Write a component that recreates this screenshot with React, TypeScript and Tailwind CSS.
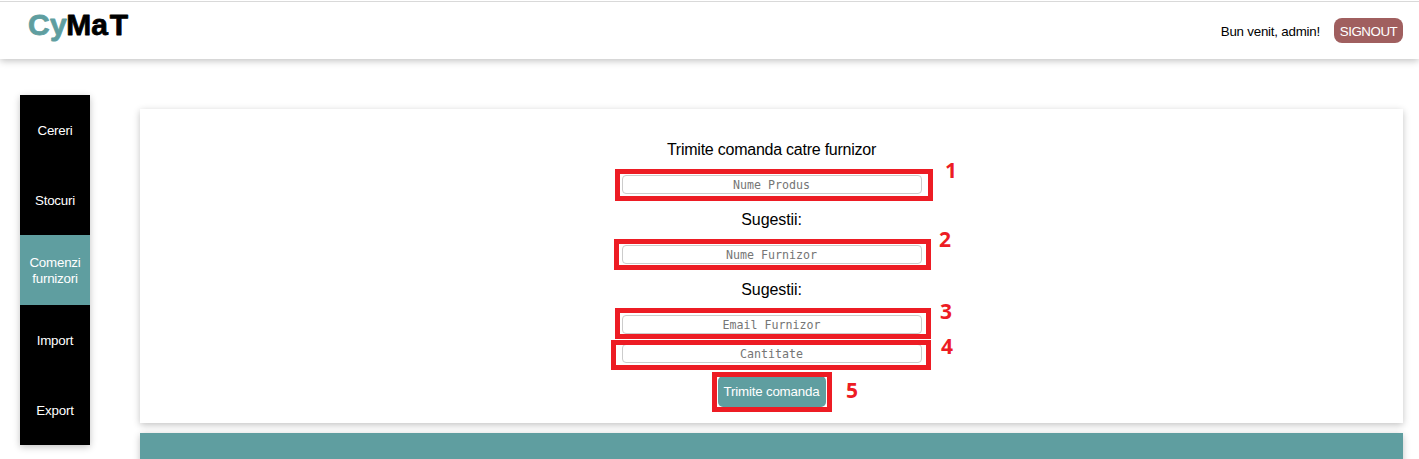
import React from 'react';

const navItems = ['Cereri', 'Stocuri', 'Comenzi furnizori', 'Import', 'Export'];

function Logo() {
  return (
    <svg className="ml-[28px] h-[40px] w-[104px]" viewBox="0 0 104 40" role="img" aria-label="CyMaT">
      <text
        y="29.8"
        className="font-['Liberation_Sans',sans-serif] text-[30px] font-bold"
        strokeWidth="0.8"
        strokeLinejoin="round"
      >
        <tspan x="0 22" fill="#5f9ea0" stroke="#5f9ea0">Cy</tspan>
        <tspan x="38.2 63.3 81.7" fill="#000" stroke="#000">MaT</tspan>
      </text>
    </svg>
  );
}

function Callout({ label, frame, number }: { label: string; frame: string; number: string }) {
  return (
    <>
      <div className={`pointer-events-none absolute border-[5px] border-[#ed1c24] ${frame}`} />
      <span
        className={`pointer-events-none absolute font-['Open_Sans',sans-serif] text-[21px] leading-[24px] font-bold text-[#ed1c24] ${number}`}
      >
        {label}
      </span>
    </>
  );
}

function Field({ placeholder }: { placeholder: string }) {
  return (
    <input
      className="block h-[19px] w-[300px] rounded-[4px] border border-[#ccc] bg-white text-center font-['DejaVu_Sans_Mono',monospace] text-[11.63px] leading-[15px] outline-none placeholder:text-[#757575]"
      placeholder={placeholder}
    />
  );
}

export default function App() {
  return (
    <div className="relative h-[459px] overflow-hidden bg-white font-['Liberation_Sans',Arial,sans-serif] text-black">
      <header className="h-[59px] pt-px shadow-[0_2px_7px_rgba(0,0,0,0.24)]">
        <div className="flex items-start justify-between border-t border-[#d9d9d9] pt-[3px] pr-4">
          <Logo />
          <div className="flex items-center pt-[13px] text-[13.33px] leading-[15px]">
            <span className="mr-[14px] pt-[2px] tracking-[-0.22px]">Bun venit, admin!</span>
            <button className="h-[25px] w-[69px] rounded-[8px] bg-[#a05f5f] pt-px text-center tracking-[-0.45px] text-white">
              SIGNOUT
            </button>
          </div>
        </div>
      </header>

      <div className="flex items-start pr-4 pl-5">
        <nav className="mt-9 mr-[50px] w-[70px] shrink-0 bg-black shadow-[0_2px_7px_rgba(0,0,0,0.24)]">
          {navItems.map((item) => (
            <a
              key={item}
              className={`flex h-[70px] items-center justify-center px-1 pt-[2px] text-center text-[13.33px] leading-[16px] tracking-[-0.2px] text-white ${
                item === 'Comenzi furnizori' ? 'bg-[#5f9ea0]' : 'bg-black'
              }`}
            >
              {item}
            </a>
          ))}
        </nav>

        <main className="mt-[50px] flex grow flex-col gap-[10px]">
          <section className="flex h-[314px] flex-col items-center pt-[31px] text-[16px] leading-[20px] shadow-[0_2px_7px_rgba(0,0,0,0.24)]">
            <h1 className="mb-[15px] tracking-[-0.24px]">Trimite comanda catre furnizor</h1>
            <Field placeholder="Nume Produs" />
            <p className="mt-[16px] mb-[15px] tracking-[-0.1px]">Sugestii:</p>
            <Field placeholder="Nume Furnizor" />
            <p className="mt-[16px] mb-[15px] tracking-[-0.1px]">Sugestii:</p>
            <Field placeholder="Email Furnizor" />
            <div className="h-[10px]" />
            <Field placeholder="Cantitate" />
            <button className="mt-[13px] h-[31px] w-[108px] rounded-[5px] bg-[#5f9ea0] text-[13.33px] tracking-[-0.2px] text-white">
              Trimite comanda
            </button>
          </section>
          <section className="h-[60px] bg-[#5f9ea0] shadow-[0_2px_7px_rgba(0,0,0,0.24)]" />
        </main>
      </div>

      <Callout label="1" frame="left-[615px] top-[169px] w-[318px] h-[32px]" number="left-[945px] top-[158px]" />
      <Callout label="2" frame="left-[614px] top-[239px] w-[317px] h-[31px]" number="left-[939px] top-[227px]" />
      <Callout label="3" frame="left-[615px] top-[308px] w-[316px] h-[31px]" number="left-[940px] top-[299px]" />
      <Callout label="4" frame="left-[611px] top-[340px] w-[320px] h-[30px]" number="left-[941px] top-[334px]" />
      <Callout label="5" frame="left-[712px] top-[372px] w-[120px] h-[40px]" number="left-[846px] top-[378px]" />
    </div>
  );
}
